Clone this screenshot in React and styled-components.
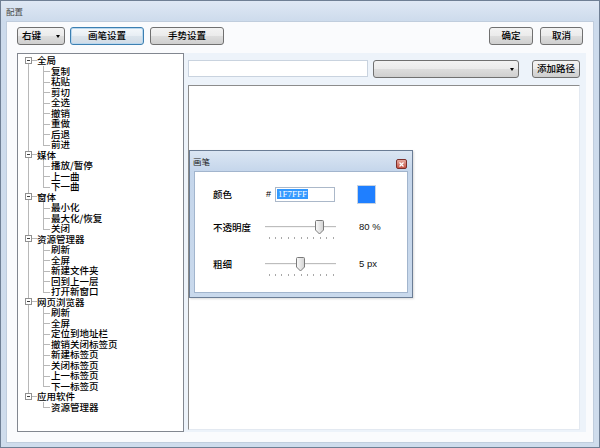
import React from 'react'
import styled, { createGlobalStyle, css } from 'styled-components'

const GlobalStyle = createGlobalStyle`
  html, body {
    margin: 0;
    padding: 0;
    background: #fff;
  }
  body {
    font-family: "Noto Sans CJK SC", "Noto Sans", sans-serif;
    color: #000;
  }
  * { box-sizing: border-box; }
`

const Window = styled.div`
  width: 600px;
  height: 448px;
  border: 1px solid #6f7f94;
  background: linear-gradient(#dfe8f4 0px, #cddbec 20px, #cfdcec 100%);
  display: flex;
  flex-direction: column;
`

const TitleBar = styled.div`
  height: 20px;
  padding-left: 5px;
  display: flex;
  align-items: center;
  font-size: 8.5px;
  color: #4a4a4a;
`

const Client = styled.div`
  flex: 1;
  margin: 0 5px 4px;
  border: 1px solid #c0cddd;
  background: #fafbfd;
  padding: 5px 7px 10px 10px;
  display: flex;
  flex-direction: column;
`

const Toolbar = styled.div`
  height: 18px;
  padding-right: 3px;
  display: flex;
  align-items: stretch;
  gap: 5px;
`

const Spacer = styled.div`
  flex: 1;
`

const buttonFace = css`
  border: 1px solid #707070;
  border-radius: 3px;
  background: linear-gradient(#f3f3f3 0%, #ebebeb 48%, #dddddd 52%, #cfcfcf 100%);
  font-family: inherit;
  font-size: 9.5px;
  font-weight: 500;
  color: #000;
  padding: 0;
`

const Button = styled.button`
  ${buttonFace};
  width: ${p => p.$w}px;
  height: ${p => p.$h || 18}px;
  margin-left: ${p => p.$gap || 0}px;
  display: flex;
  align-items: center;
  justify-content: center;
  line-height: 1;
  ${p => p.$focus && css`
    border-color: #3c7fb1;
    background: linear-gradient(#f4f8fb 0%, #e8eef4 48%, #dbe4ec 52%, #d0dbe6 100%);
    box-shadow: inset 0 0 0 1px #b9d7ee;
  `}
`

const Combo = styled.div`
  ${buttonFace};
  width: ${p => p.$w}px;
  height: 18px;
  display: flex;
  align-items: center;
  padding-left: 4px;
  padding-right: 4px;
  line-height: 1;
`

const Arrow = styled.span`
  margin-left: auto;
  width: 0;
  height: 0;
  border-left: 2.5px solid transparent;
  border-right: 2.5px solid transparent;
  border-top: 3px solid #000;
`

const Body = styled.div`
  flex: 1;
  margin-top: 8px;
  display: flex;
`

const TreePanel = styled.div`
  width: 167px;
  border: 1px solid #828790;
  background: #fff;
  padding-top: 1px;
  font-size: 9.5px;
  font-weight: 500;
  line-height: 10.5px;
`

const Group = styled.div`
  position: relative;
  &::before {
    content: '';
    position: absolute;
    left: 10px;
    top: ${p => (p.$first ? '5px' : '0')};
    ${p => (p.$last ? 'height: 5px;' : 'bottom: 0;')}
    border-left: 1px solid #b8b8b8;
  }
`

const RootRow = styled.div`
  position: relative;
  height: 10.5px;
  display: flex;
  align-items: center;
  padding-left: 7px;
  white-space: nowrap;
`

const Expander = styled.span`
  position: relative;
  z-index: 1;
  width: 7px;
  height: 7px;
  border: 1px solid #919191;
  background: #fff;
  flex: none;
  &::after {
    content: '';
    position: absolute;
    left: 1px;
    top: 2px;
    width: 3px;
    height: 1px;
    background: #404040;
  }
`

const Dash = styled.span`
  width: 5px;
  height: 1px;
  background: #b8b8b8;
  flex: none;
`

const ChildRow = styled.div`
  position: relative;
  height: 10.5px;
  padding-left: 33px;
  white-space: nowrap;
  &::before {
    content: '';
    position: absolute;
    left: 25px;
    top: 0;
    width: 6px;
    height: 5.5px;
    border-left: 1px solid #b8b8b8;
    border-bottom: 1px solid #b8b8b8;
  }
  ${p => !p.$last && css`
    &::after {
      content: '';
      position: absolute;
      left: 25px;
      top: 5px;
      bottom: 0;
      border-left: 1px solid #b8b8b8;
    }
  `}
`

const RightPanel = styled.div`
  flex: 1;
  background: #edf3fa;
  padding: 7px 6px 2px 4px;
  display: flex;
  flex-direction: column;
`

const PathRow = styled.div`
  height: 18px;
  display: flex;
  align-items: flex-start;
  gap: 5px;
`

const TextInput = styled.div`
  width: 180px;
  height: 17px;
  border: 1px solid #c9d3df;
  background: #fff;
`

const Canvas = styled.div`
  flex: 1;
  margin-top: 7px;
  position: relative;
  background: #fff;
  border-top: 1px solid #8c8c8c;
  border-left: 1px solid #8c8c8c;
  border-right: 1px solid #e3e9f1;
  border-bottom: 1px solid #e3e9f1;
`

const Dialog = styled.div`
  position: absolute;
  left: 0;
  top: 64px;
  width: 224px;
  height: 148px;
  border: 1px solid #6b7d95;
  background: linear-gradient(#dbe6f3 0px, #c5d6eb 20px, #c9d9ec 100%);
  display: flex;
  flex-direction: column;
  box-shadow: 1px 1px 2px rgba(0, 0, 0, 0.15);
`

const DialogTitle = styled.div`
  height: 20px;
  padding: 0 5px 0 3px;
  display: flex;
  align-items: center;
  font-size: 8.5px;
  color: #1e1e1e;
`

const CloseBox = styled.div`
  margin-left: auto;
  margin-top: 6px;
  width: 11px;
  height: 10px;
  border: 1px solid #7b2f2a;
  border-radius: 2px;
  background: linear-gradient(#e6aaa0, #c65446);
  display: flex;
  align-items: center;
  justify-content: center;
`

const DialogBody = styled.div`
  flex: 1;
  margin: 0 4px 4px;
  border: 1px solid #a2b5cd;
  background: #fff;
  padding: 12px 0 0 18px;
  font-size: 9.5px;
  font-weight: 500;
  display: flex;
  flex-direction: column;
`

const FieldRow = styled.div`
  display: flex;
  align-items: ${p => (p.$top ? 'flex-start' : 'center')};
  height: ${p => p.$h}px;
  margin-top: ${p => p.$mt || 0}px;
`

const FieldLabel = styled.div`
  width: 52px;
  line-height: 14px;
`

const Control = styled.div`
  width: 92px;
  display: flex;
  align-items: center;
`

const Hash = styled.span`
  width: 10px;
  padding-left: 1px;
  font-family: "Liberation Sans", sans-serif;
  font-size: 9px;
`

const HexInput = styled.div`
  width: 60px;
  height: 15px;
  border: 1px solid #abb8c9;
  padding: 1px 1px;
  display: flex;
  align-items: center;
`

const Selected = styled.span`
  background: #3399ff;
  color: #fff;
  font-family: "Liberation Serif", serif;
  font-size: 9px;
  line-height: 10px;
  padding: 0 1px;
`

const Swatch = styled.div`
  width: 19px;
  height: 19px;
  background: #1f7fff;
  border: 1px solid #c8d4e2;
`

const Value = styled.div`
  padding-left: 2px;
  line-height: 14px;
  font-family: "Liberation Sans", sans-serif;
  font-size: 9.5px;
  color: #111;
`

const SliderBox = styled.div`
  position: relative;
  width: 71px;
  height: 22px;
`

const Track = styled.div`
  position: absolute;
  left: 0;
  right: 0;
  top: 6px;
  height: 2px;
  background: #bdbdbd;
  border-bottom: 1px solid #f4f4f4;
`

const Thumb = styled.svg`
  position: absolute;
  top: 0;
`

const Ticks = styled.svg`
  position: absolute;
  left: 0;
  top: 17px;
`

function Slider({ value, max }) {
  const center = 3.5 + (value / max) * 64
  const ticks = Array.from({ length: 11 }, (_, i) => 3.5 + i * 6.4)
  return (
    <SliderBox>
      <Track />
      <Thumb width="9" height="15" viewBox="0 0 9 15" style={{ left: center - 4.5 }}>
        <defs>
          <linearGradient id={`thumb${max}`} x1="0" y1="0" x2="1" y2="0">
            <stop offset="0" stopColor="#fafafa" />
            <stop offset="1" stopColor="#d2d2d2" />
          </linearGradient>
        </defs>
        <path
          d="M1.5 0.5 H7.5 Q8.5 0.5 8.5 1.5 V10 L4.5 14 L0.5 10 V1.5 Q0.5 0.5 1.5 0.5 Z"
          fill={`url(#thumb${max})`}
          stroke="#7a7a7a"
        />
      </Thumb>
      <Ticks width="71" height="3">
        {ticks.map(x => (
          <rect key={x} x={Math.round(x)} y="0" width="1" height="2" fill="#a8a8a8" />
        ))}
      </Ticks>
    </SliderBox>
  )
}

const tree = [
  { name: '全局', items: ['复制', '粘贴', '剪切', '全选', '撤销', '重做', '后退', '前进'] },
  { name: '媒体', items: ['播放/暂停', '上一曲', '下一曲'] },
  { name: '窗体', items: ['最小化', '最大化/恢复', '关闭'] },
  { name: '资源管理器', items: ['刷新', '全屏', '新建文件夹', '回到上一层', '打开新窗口'] },
  {
    name: '网页浏览器',
    items: ['刷新', '全屏', '定位到地址栏', '撤销关闭标签页', '新建标签页', '关闭标签页', '上一标签页', '下一标签页'],
  },
  { name: '应用软件', items: ['资源管理器'] },
]

export default function App() {
  return (
    <>
      <GlobalStyle />
      <Window>
        <TitleBar>配置</TitleBar>
        <Client>
          <Toolbar>
            <Combo $w={48}>
              右键
              <Arrow />
            </Combo>
            <Button $w={74} $focus>画笔设置</Button>
            <Button $w={74} $gap={1}>手势设置</Button>
            <Spacer />
            <Button $w={44}>确定</Button>
            <Button $w={43} $gap={2}>取消</Button>
          </Toolbar>
          <Body>
            <TreePanel>
              {tree.map((g, gi) => (
                <Group key={g.name + gi} $first={gi === 0} $last={gi === tree.length - 1}>
                  <RootRow>
                    <Expander />
                    <Dash />
                    {g.name}
                  </RootRow>
                  {g.items.map((it, i) => (
                    <ChildRow key={it + i} $last={i === g.items.length - 1}>
                      {it}
                    </ChildRow>
                  ))}
                </Group>
              ))}
            </TreePanel>
            <RightPanel>
              <PathRow>
                <TextInput />
                <Combo $w={146}>
                  <Arrow />
                </Combo>
                <Spacer />
                <Button $w={48}>添加路径</Button>
              </PathRow>
              <Canvas>
                <Dialog>
                  <DialogTitle>
                    画笔
                    <CloseBox>
                      <svg width="5" height="5" viewBox="0 0 5 5">
                        <path d="M0.5 0.5 L4.5 4.5 M4.5 0.5 L0.5 4.5" stroke="#fff" strokeWidth="1.2" />
                      </svg>
                    </CloseBox>
                  </DialogTitle>
                  <DialogBody>
                    <FieldRow $h={20}>
                      <FieldLabel>颜色</FieldLabel>
                      <Control>
                        <Hash>#</Hash>
                        <HexInput>
                          <Selected>1F7FFF</Selected>
                        </HexInput>
                      </Control>
                      <Swatch />
                    </FieldRow>
                    <FieldRow $h={22} $mt={16} $top>
                      <FieldLabel>不透明度</FieldLabel>
                      <Control>
                        <Slider value={80} max={100} />
                      </Control>
                      <Value>80 %</Value>
                    </FieldRow>
                    <FieldRow $h={22} $mt={15} $top>
                      <FieldLabel>粗细</FieldLabel>
                      <Control>
                        <Slider value={5} max={10} />
                      </Control>
                      <Value>5 px</Value>
                    </FieldRow>
                  </DialogBody>
                </Dialog>
              </Canvas>
            </RightPanel>
          </Body>
        </Client>
      </Window>
    </>
  )
}
